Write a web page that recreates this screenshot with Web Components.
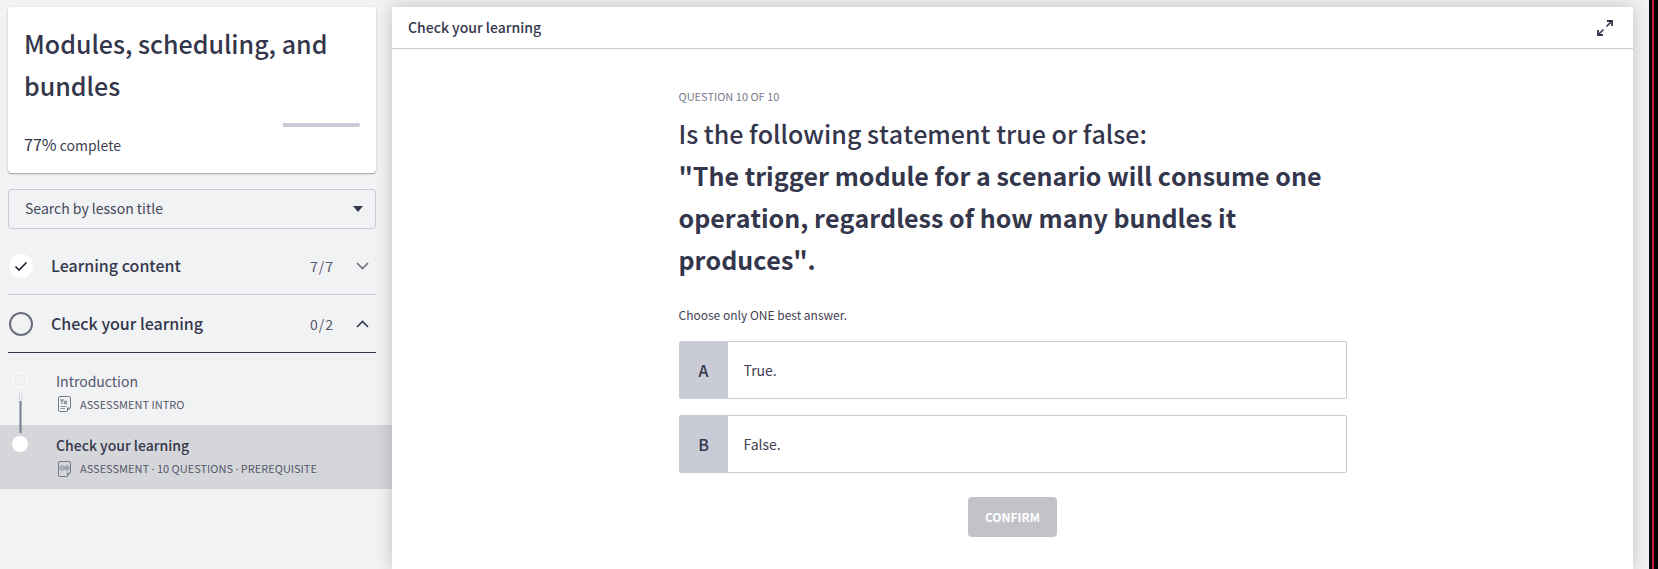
<!DOCTYPE html>
<html lang="en">
<head>
<meta charset="utf-8">
<title>Modules, scheduling, and bundles</title>
<style>
html, body { height: 100%; }
body { margin: 0; background: #f1f2f4; color: #34364c; font-family: "Noto Sans CJK SC", "Noto Sans", sans-serif; overflow: hidden; }
</style>
</head>
<body>
<course-page></course-page>
<script>
const define = (name, html, setup) => {
  const template = document.createElement('template');
  template.innerHTML = html;
  customElements.define(name, class extends HTMLElement {
    constructor() {
      super();
      this.attachShadow({ mode: 'open' }).append(template.content.cloneNode(true));
    }
    connectedCallback() { if (setup) setup(this, this.shadowRoot); }
  });
};

define('course-summary', `
<style>
:host { display: block; background: #fff; border-radius: 4px; padding: 15px 16px 16px; box-shadow: 0 1px 1px #a9abb0, 0 1px 3px #cfd0d4; }
h1 { margin: 0 0 17px; font-size: 25px; line-height: 42px; font-weight: 500; }
.track { display: flex; justify-content: flex-end; height: 4px; border-radius: 2px; overflow: hidden; background: #fff; }
.rest { width: 23%; background: #c9ccd6; }
p { margin: 6px 0 0; font-size: 14px; line-height: 24px; color: #3f4151; }
b { font-weight: 400; font-size: 16px; line-height: 20px; color: #34364c; }
</style>
<h1><slot></slot></h1>
<div class="track" role="progressbar" aria-valuenow="77" aria-label="Course progress"><div class="rest"></div></div>
<p><b>77%</b> complete</p>`);

define('lesson-search', `
<style>
:host { display: block; }
.box { display: flex; align-items: center; height: 38px; border: 1px solid #c9ccd6; border-radius: 3px; padding: 0 12px 0 16px; }
input { flex: 1; min-width: 0; border: 0; padding: 0 0 2px; background: none; outline: 0; font: 14px/24px "Noto Sans CJK SC", sans-serif; color: inherit; }
input::placeholder { color: #45475b; opacity: 1; }
</style>
<div class="box"><input type="text" aria-label="Search by lesson title" placeholder="Search by lesson title"><svg width="10" height="6" aria-hidden="true"><path d="M0 0h10L5 6z" fill="#34364c"/></svg></div>`);

define('section-row', `
<style>
:host { display: block; }
button { display: flex; align-items: center; width: 100%; height: 58px; padding: 0 7px 0 1px; border: 0; border-bottom: 1px solid #c9ccd6; background: none; font-family: inherit; color: inherit; text-align: left; }
:host([open]) button { border-color: #34364c; }
.name { flex: 1; margin-left: 18px; padding-bottom: 2px; font-size: 16px; line-height: 24px; font-weight: 500; }
.count { font-size: 14px; line-height: 24px; letter-spacing: 1px; margin-right: 22px; color: #55576b; }
:host(:not([open])) .ring, :host(:not([open])) .up, :host([open]) .tick, :host([open]) .down { display: none; }
</style>
<button type="button">
<svg width="24" height="24" fill="none" aria-hidden="true"><g class="tick"><circle cx="12" cy="12" r="12" fill="#fff"/><path d="M6.500 12.500l3.500 3.500 7.500-7.500" stroke="#22232d" stroke-width="1.600"/></g><circle class="ring" cx="12" cy="12" r="11" stroke="#6c6e80" stroke-width="2"/></svg>
<span class="name"><slot></slot></span><span class="count"></span>
<svg width="13" height="8" fill="none" aria-hidden="true"><path class="down" d="M1 1l5.500 5.500L12 1" stroke="#6c6e80" stroke-width="1.600"/><path class="up" d="M1 7l5.500-5.500L12 7" stroke="#34364c" stroke-width="1.600"/></svg>
</button>`, (el, root) => {
  root.querySelector('.count').textContent = el.getAttribute('count');
  root.querySelector('button').setAttribute('aria-expanded', el.hasAttribute('open'));
});

define('lesson-item', `
<style>
:host { display: block; }
a { display: flex; height: 64px; color: #55576b; text-decoration: none; }
:host([current]) a { background: #d5d6da; }
.rail { width: 16px; margin-left: 12px; padding-top: 8px; }
.rail svg { display: block; overflow: visible; }
.text { margin-left: 28px; padding-top: 8px; }
.name { display: block; font-size: 14px; line-height: 24px; }
:host([current]) .name { font-weight: 500; color: #34364c; }
.meta { display: flex; align-items: center; gap: 9px; margin-left: 2px; font-size: 11px; line-height: 22px; white-space: pre; }
:host([current]) .first, :host(:not([current])) .second { display: none; }
</style>
<a href="#">
<span class="rail"><svg width="16" height="56" fill="none" aria-hidden="true">
<g class="first"><circle cx="8" cy="11" r="7.500" stroke="#fff"/><path d="M8.500 24v8" stroke="#fff"/><path d="M7.500 24v8M9.500 24v8" stroke="#d2d3d8"/><path d="M8.500 32v24" stroke="#777a8d" stroke-width="2"/></g>
<g class="second"><path d="M8.500-8v8" stroke="#777a8d" stroke-width="2"/><circle cx="8" cy="11" r="8" fill="#fff"/></g></svg></span>
<span class="text"><span class="name"><slot></slot></span>
<span class="meta"><svg width="13" height="16" fill="none" stroke="#777a8d" aria-hidden="true"><path d="M2 .5h9a1.500 1.500 0 0 1 1.500 1.500v9.500l-4 4H2A1.500 1.500 0 0 1 .5 14V2A1.500 1.500 0 0 1 2 .5zM12.500 12h-3v3.500"/>
<g class="first"><path d="M2 4h4M4 4v4M6 5l3 3M9 5L6 8" stroke-width="1.200"/><path d="M2.500 10.500H9M2.500 12.500H7" stroke-width=".8"/></g>
<g class="second" stroke-width=".8"><circle cx="4" cy="7" r="2.300"/><circle cx="9" cy="7" r="2.300"/><path d="M3 7l1 1 1.500-2M8 6l2 2M10 6L8 8"/></g></svg><slot name="meta"></slot></span></span>
</a>`);

define('course-sidebar', `
<style>
:host { display: block; }
.top { padding: 7px 16px 0 8px; }
lesson-search { margin: 16px 0 8px; }
.lessons { margin-top: 8px; }
.dot { font-family: "Noto Sans", sans-serif; }
</style>
<div class="top"><course-summary>Modules, scheduling, and bundles</course-summary>
<lesson-search></lesson-search>
<section-row count="7/7">Learning content</section-row>
<section-row count="0/2" open>Check your learning</section-row></div>
<nav class="lessons" aria-label="Lessons"><lesson-item>Introduction<span slot="meta">ASSESSMENT INTRO</span></lesson-item>
<lesson-item current>Check your learning<span slot="meta">ASSESSMENT <span class="dot">·</span> 10 QUESTIONS <span class="dot">·</span> PREREQUISITE</span></lesson-item></nav>`);

define('answer-option', `
<style>
:host { display: block; }
button { display: flex; width: 100%; height: 58px; padding: 0; border: 1px solid #c9ccd6; border-radius: 2px; background: #fff; font-family: inherit; color: #34364c; text-align: left; line-height: 24px; align-items: stretch; }
.key { display: grid; place-items: center; width: 48px; background: #c9ccd6; font-size: 16px; font-weight: 500; }
.label { align-self: center; margin-left: 16px; font-size: 14px; color: #3f4151; }
</style>
<button type="button"><span class="key"><slot name="key"></slot></span><span class="label"><slot></slot></span></button>`);

define('lesson-panel', `
<style>
:host { display: flex; flex-direction: column; background: #fff; box-shadow: 0 0 16px rgba(0,0,0,.2); }
header { display: flex; align-items: center; justify-content: space-between; height: 41px; padding: 0 20px 0 16px; border-bottom: 1px solid #c9ccd6; }
h2 { margin: 0 0 2px; font-size: 14px; line-height: 24px; font-weight: 500; }
header button { padding: 0; border: 0; background: none; display: block; height: 16px; color: inherit; }
svg { display: block; }
main { width: 668px; max-width: 90%; margin: 0 auto; padding-top: 37px; }
.step { margin: 0; font-size: 11px; line-height: 20px; color: #777a8d; }
.question { margin: 6px 0 0; font-size: 25px; line-height: 42px; font-weight: 500; font-kerning: none; }
.question b { font-weight: 700; }
.hint { margin: 23px 0 14px; font-size: 12px; line-height: 24px; color: #3f4151; }
.options { display: grid; gap: 16px; }
.confirm { display: block; margin: 24px auto 0; padding: 0 17px; height: 40px; border: 0; border-radius: 4px; background: #c2c3c9; color: #fff; font: 700 12px/24px "Noto Sans CJK SC", sans-serif; }
</style>
<header><h2>Check your learning</h2><button type="button" aria-label="Full screen"><svg width="16" height="16" fill="none" stroke="#34364c"><path stroke-width="1.800" d="M10 1h5v5M1 10v5h5"/><path stroke-width="1.600" d="M15 1L9.500 6.500M1 15l5.500-5.500"/></svg></button></header>
<main><p class="step">QUESTION 10 OF 10</p>
<h1 class="question">Is the following statement true or false:<br><b>"The trigger module for a scenario will consume one operation, regardless of how many bundles it produces".</b></h1>
<p class="hint">Choose only ONE best answer.</p>
<div class="options"><answer-option><span slot="key">A</span>True.</answer-option><answer-option><span slot="key">B</span>False.</answer-option></div>
<button class="confirm" type="button" disabled>CONFIRM</button></main>`);

define('course-page', `
<style>
:host { display: grid; grid-template-columns: 392px 1fr 16px 9px; min-height: 100vh; }
lesson-panel { margin-top: 7px; }
.edge { position: relative; grid-column: 4; background: linear-gradient(90deg, #0a0a0c 3px, #c8193c 3px, #c8193c 5px, #000 5px); }
</style>
<course-sidebar></course-sidebar><lesson-panel></lesson-panel><div class="edge"></div>`);
</script>
</body>
</html>
